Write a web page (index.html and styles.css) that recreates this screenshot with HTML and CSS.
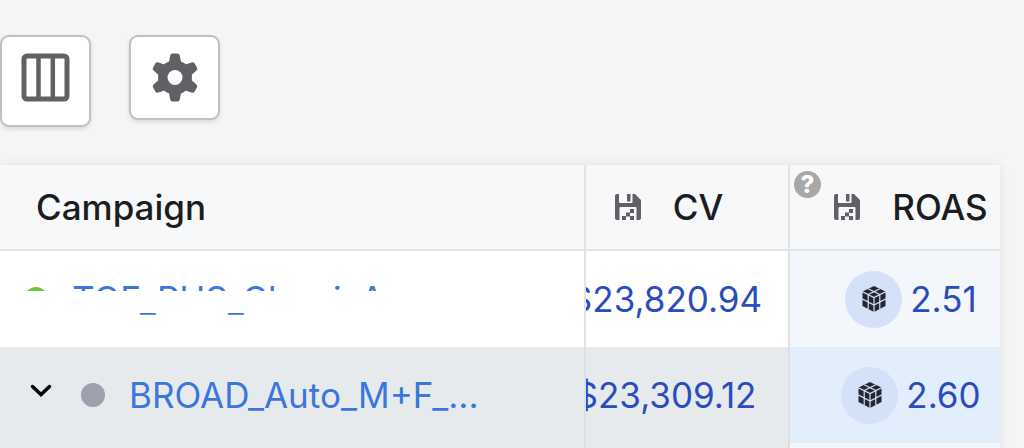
FILE: index.html
```html
<!DOCTYPE html>
<html lang="en">
<head>
  <meta charset="UTF-8" />
  <meta name="viewport" content="width=device-width, initial-scale=1" />
  <title>Campaigns</title>
  <link rel="stylesheet" href="styles.css">
</head>
<body>
  <svg width="0" height="0" class="defs" aria-hidden="true">
    <symbol id="save" viewBox="0 0 26 26">
      <path fill="#5f6165" d="M2 0h2v8q0 1 1 1h11.500q1 0 1-1V0H20l6 6v18q0 2-2 2h-2.500V14q0-1-1-1h-15q-1 0-1 1v12H2q-2 0-2-2V2q0-2 2-2zM12 0h3.500v7.500H12z"/>
      <path fill="#5f6165" d="M15 15h4v4h-4zM11 18.500h4v4h-4zM7 22h4v4H7zM15 22h4v4h-4z"/>
    </symbol>
    <symbol id="cube" viewBox="0 0 24 26">
      <path fill="#23272f" d="M12 0l11.500 5.500v14.500L12 26 .5 20V5.500z"/>
      <path fill="none" stroke="#d5e1f8" stroke-width="1.200" d="M0 5.500l12 6 12-6M12 11.500V26M0 12.800l12 6.200 12-6.200M6.200 8.500V23M17.800 8.500V23M6.200 2.800l11.600 5.700M17.800 2.800L6.200 8.500"/>
    </symbol>
  </svg>

  <div class="page">
    <div class="toolbar">
      <button class="tool-button tall" aria-label="Columns">
        <svg width="50" height="50" viewBox="0 0 50 50">
          <rect x="3" y="3" width="43" height="43" rx="3" fill="none" stroke="#5f6165" stroke-width="5"/>
          <path d="M17.500 3v43M31.800 3v43" stroke="#5f6165" stroke-width="4.500"/>
        </svg>
      </button>
      <button class="tool-button" aria-label="Settings">
        <svg width="50" height="50" viewBox="0 0 50 50">
          <g fill="#5f6165">
            <circle cx="25" cy="24.500" r="17"/>
            <path id="tooth" d="M18.500 12L20 3.500Q20.500 .5 22.500 .5h5Q29.500 .5 30 3.500L31.500 12v25L30 45.500Q29.500 48.500 27.500 48.500h-5Q20.500 48.500 20 45.500L18.500 37z"/>
            <use href="#tooth" transform="rotate(60 25 24.500)"/>
            <use href="#tooth" transform="rotate(120 25 24.500)"/>
          </g>
          <circle cx="25" cy="24.500" r="7.500" fill="#fff"/>
        </svg>
      </button>
    </div>

    <table class="campaigns">
      <thead>
        <tr>
          <th class="name">Campaign</th>
          <th class="cv"><div class="cell"><svg width="26" height="26"><use href="#save"/></svg>CV</div></th>
          <th class="roas">
            <span class="help">?</span>
            <div class="cell"><svg width="26" height="26"><use href="#save"/></svg>ROAS</div>
          </th>
        </tr>
      </thead>
      <tbody>
        <tr>
          <td class="name">
            <div class="campaign">
              <span class="dot active"></span>
              <a href="#">TOF_PHS_ClassicA</a>
              <span class="redacted"></span>
            </div>
          </td>
          <td class="cv"><div class="cell">$23,820.94</div></td>
          <td class="roas"><div class="cell"><span class="badge"><svg width="24" height="26"><use href="#cube"/></svg></span>2.51</div></td>
        </tr>
        <tr class="selected">
          <td class="name">
            <div class="campaign">
              <button class="expand" aria-label="Expand">
                <svg width="22" height="14" viewBox="0 0 22 14"><path d="M2.500 2.500l8.500 8 8.500-8" fill="none" stroke="#000" stroke-width="3.500" stroke-linecap="round"/></svg>
              </button>
              <span class="dot"></span>
              <a href="#">BROAD_Auto_M+F_...</a>
            </div>
          </td>
          <td class="cv"><div class="cell">$23,309.12</div></td>
          <td class="roas"><div class="cell"><span class="badge"><svg width="24" height="26"><use href="#cube"/></svg></span>2.60</div></td>
        </tr>
        <tr class="next">
          <td class="name"></td>
          <td class="cv"></td>
          <td class="roas"></td>
        </tr>
      </tbody>
    </table>
  </div>
</body>
</html>
```

FILE: styles.css
```css
* {
  box-sizing: border-box;
}
body {
  margin: 0;
  font-family: Inter, sans-serif;
  font-size: 35px;
  line-height: 44px;
  background-color: #f5f5f5;
  color: #1c1d20;
}
.defs {
  position: absolute;
}
.page {
  height: 100vh;
  overflow: hidden;
  padding-top: 35px;
}
.toolbar {
  display: flex;
  align-items: flex-start;
  gap: 38px;
  height: 130px;
}
.tool-button {
  width: 91px;
  height: 85px;
  padding: 0;
  background: #fff;
  border: 2px solid #bfc0c5;
  border-radius: 9px;
  box-shadow: 0 2px 4px rgba(0,0,0,0.12);
}
.tool-button.tall {
  height: 92px;
  padding-bottom: 7px;
}
.tool-button svg {
  display: block;
  margin: 0 auto;
}
.campaigns {
  width: calc(100% - 24px);
  table-layout: fixed;
  border-collapse: separate;
  border-spacing: 0;
  background: #fff;
  box-shadow: 0 0 10px rgba(0,0,0,0.08);
}
th, td {
  position: relative;
  height: 96px;
  padding: 0;
  text-align: left;
}
th {
  height: 86px;
  background: #f7f8fa;
  border-bottom: 2px solid #e1e3e5;
  font-weight: 500;
}
.cv {
  width: 204px;
  padding-right: 36px;
}
.roas {
  width: 210px;
  padding-left: 32px;
}
.name, .cv {
  border-right: 2px solid #e1e3e5;
}
td.cv {
  padding-right: 42px;
  overflow: hidden;
}
th.name {
  padding-left: 36px;
}
.cell {
  display: flex;
  justify-content: center;
  align-items: center;
  gap: 8px;
}
th .cell {
  gap: 32px;
}
td .cell {
  color: #2b4cbd;
}
td.roas {
  background: #f3f6fb;
}
.selected td, .next td {
  background: #e6eaec;
  border-color: #dddfe3;
}
.selected td.roas {
  background: #e2eefb;
}
.next td.roas {
  background: #f3f6fb;
}
.help {
  position: absolute;
  top: 6px;
  left: 4px;
  width: 27px;
  height: 27px;
  border-radius: 50%;
  background: #a8a8a8;
  color: #fff;
  font-size: 24px;
  font-weight: 800;
  line-height: 27px;
  text-align: center;
}
.badge {
  display: flex;
  justify-content: center;
  align-items: center;
  flex: none;
  width: 57px;
  height: 57px;
  border-radius: 50%;
  background: #d5e1f8;
}
.campaign {
  display: flex;
  align-items: center;
  gap: 24px;
  padding-left: 24px;
}
.campaign a {
  color: #3b76dc;
  text-decoration: none;
}
.dot {
  width: 24px;
  height: 24px;
  border-radius: 50%;
  background: #9ca1ac;
}
.dot.active {
  background: #6cc83a;
}
.expand {
  display: flex;
  width: 33px;
  padding: 0 0 8px 6px;
  border: none;
  background: none;
}
.expand svg {
  flex: none;
}
.redacted {
  position: absolute;
  top: 40px;
  left: 0;
  width: 400px;
  height: 22px;
  background: #fff;
}
```
